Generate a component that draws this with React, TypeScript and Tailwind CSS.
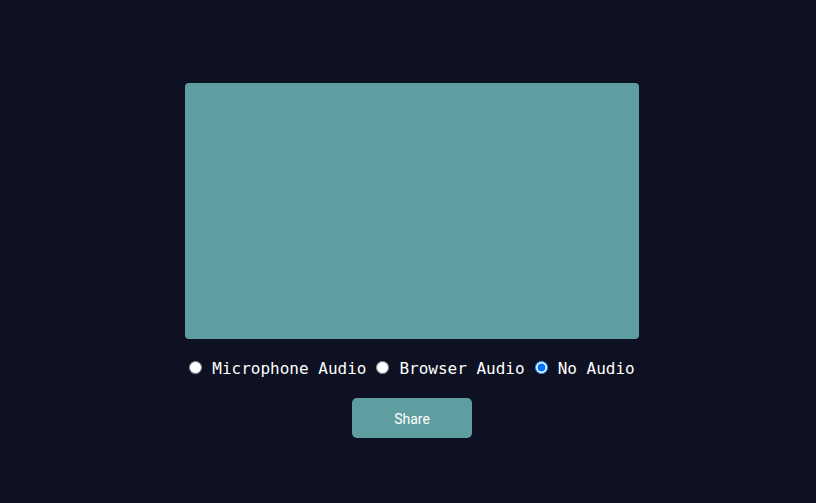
import { useState } from "react";

const OPTIONS = [
  { id: "mic", label: "Microphone Audio" },
  { id: "browser", label: "Browser Audio" },
  { id: "none", label: "No Audio" },
];

export default function App() {
  const [audio, setAudio] = useState("none");

  return (
    <div className="min-h-screen w-full bg-[#0d1121] flex flex-col items-center pt-[83px] pl-2">
      {/* Preview */}
      <div className="w-[454px] h-[256px] rounded bg-[#5f9ea0]" />

      {/* Audio options */}
      <div className="mt-[20px] h-5 flex items-center gap-[10px] text-white text-[16px] font-['DejaVu_Sans_Mono',monospace]">
        {OPTIONS.map(({ id, label }) => (
          <label key={id} className="flex items-center gap-[10px] cursor-pointer">
            <input type="radio" name="audio" checked={audio === id}
              onChange={() => setAudio(id)}
              className="m-0 mb-[3px] w-[13px] h-[13px]" />
            <span>{label}</span>
          </label>
        ))}
      </div>

      {/* Share */}
      <button className="mt-[19px] w-[120px] h-10 pt-px rounded-[5px] bg-[#5f9ea0] text-white text-sm font-['Roboto',sans-serif]">
        Share
      </button>
    </div>
  );
}
